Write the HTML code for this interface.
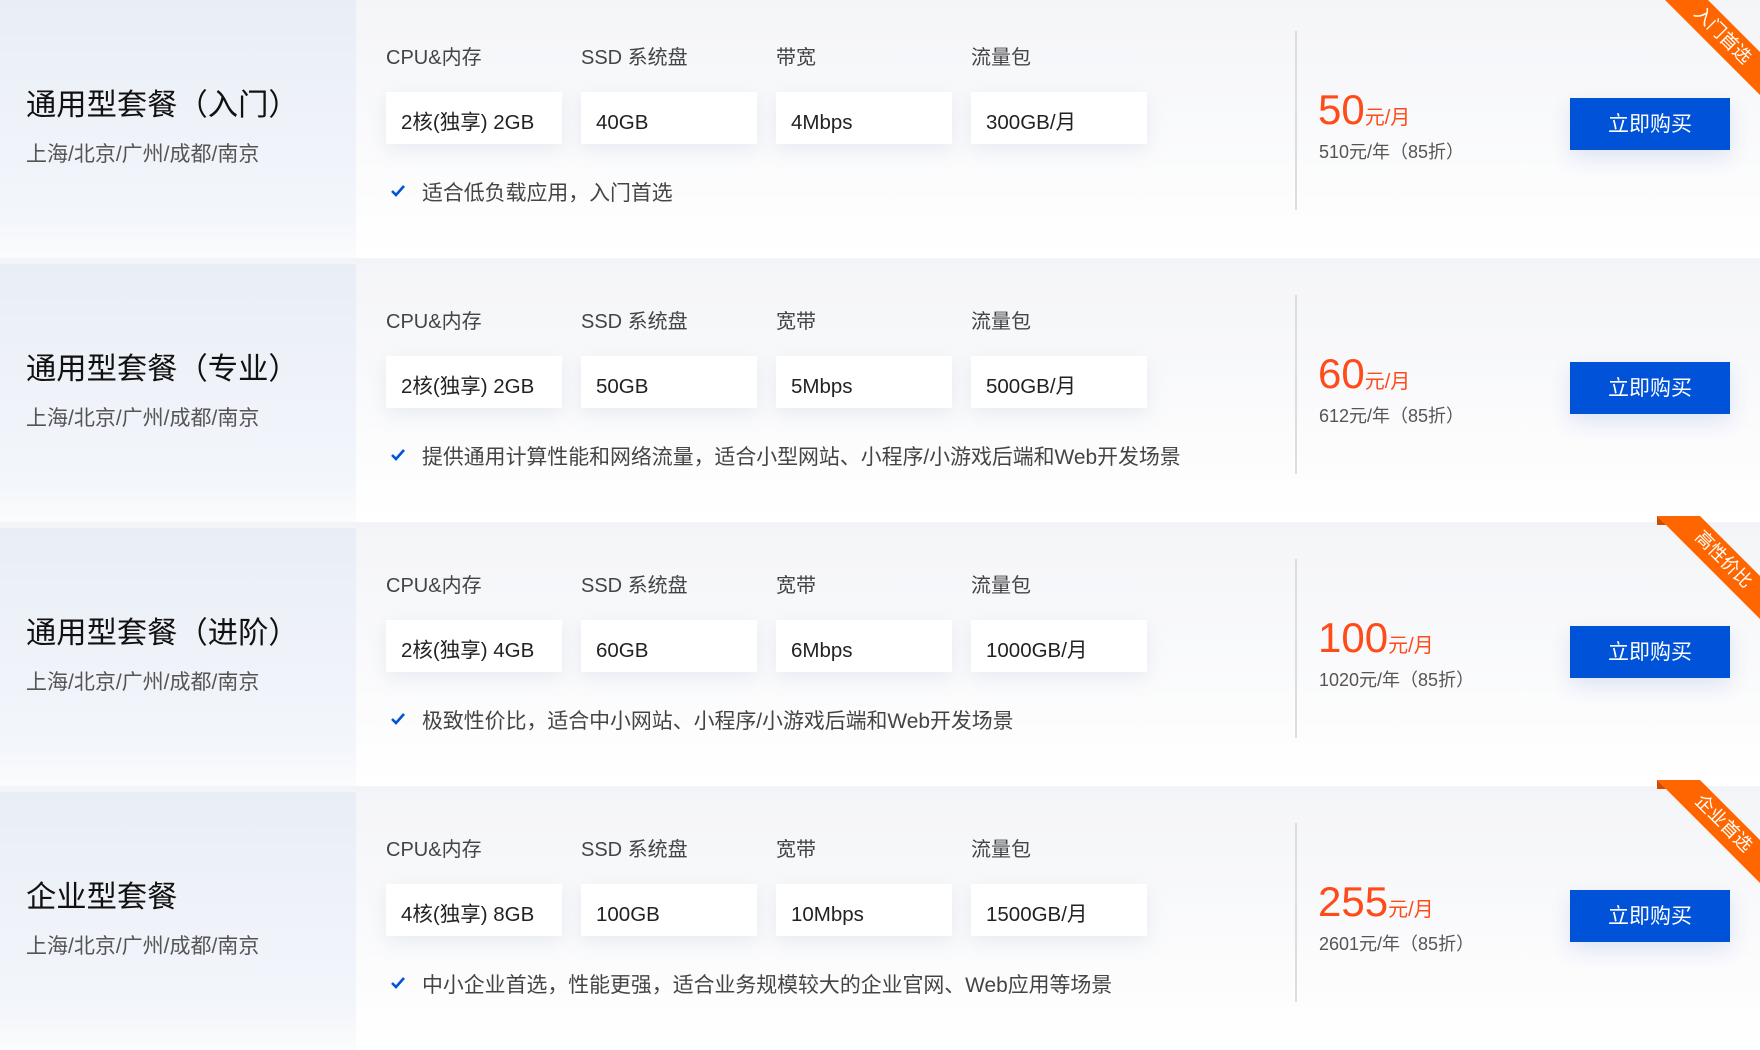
<!DOCTYPE html><html><head><meta charset="utf-8"><style>
body{margin:0;width:1760px;height:1043px;background:#f3f4f7;font-family:"Liberation Sans","Noto Sans CJK SC",sans-serif;overflow:hidden;position:relative}
.row{position:absolute;left:0;width:1760px;height:258px;background:linear-gradient(#f4f5f8,#fff);}
.left{position:absolute;left:0;top:0;width:356px;height:258px;background:linear-gradient(#e9eef6,#f3f6fb 85%,#fbfcfd)}
.title{position:absolute;left:26px;top:80px;font-size:30.3px;color:#111}
.sub{position:absolute;left:26px;top:138px;font-size:21px;color:#555}
.lab{position:absolute;top:41px;font-size:20px;color:#444}
.box{position:absolute;top:92px;width:176px;height:52px;background:#fff;box-shadow:0 6px 18px rgba(180,190,210,.25);font-size:20.5px;color:#222;line-height:62px;box-sizing:border-box;padding-left:15px}
.chk{position:absolute;left:388px;top:177px;font-size:20.9px;color:#444}
.chk svg{position:absolute;left:2px;top:7px}
.chk span{margin-left:34px}
.div{position:absolute;left:1295px;top:31px;width:2px;height:179px;background:#ddd}
.price{position:absolute;left:1318px;top:85px;color:#ff4a1a;font-size:42px;line-height:50px}
.price small{font-size:20px}
.yr{position:absolute;left:1319px;top:138px;font-size:18px;color:#555}
.btn{position:absolute;left:1570px;top:98px;width:160px;height:52px;background:#0052d9;color:#fff;font-size:21px;text-align:center;line-height:54px;box-shadow:0 8px 22px rgba(0,60,180,.12)}
.rib{position:absolute;right:0;top:0}
</style></head><body>
<div class="row" style="top:0">
<div class="left"></div><div class="title">通用型套餐（入门）</div><div class="sub">上海/北京/广州/成都/南京</div>
<div class="lab" style="left:386px">CPU&amp;内存</div><div class="lab" style="left:581px">SSD 系统盘</div><div class="lab" style="left:776px">带宽</div><div class="lab" style="left:971px">流量包</div>
<div class="box" style="left:386px">2核(独享) 2GB</div><div class="box" style="left:581px">40GB</div><div class="box" style="left:776px">4Mbps</div><div class="box" style="left:971px">300GB/月</div>
<div class="chk"><svg width="16" height="14"><path d="M2 7l4 4 8-9" stroke="#0052d9" stroke-width="2.6" fill="none"/></svg><span>适合低负载应用，入门首选</span></div>
<div class="div"></div><div class="price">50<small>元/月</small></div><div class="yr">510元/年（85折）</div><div class="btn">立即购买</div>
<svg class="rib" width="110" height="110" viewBox="0 0 110 110"><polygon points="7,-8 50,-8 110,52 110,95" fill="#ff6600"/><text transform="translate(72,36) rotate(45)" fill="#fff" font-size="18" text-anchor="middle" dominant-baseline="middle" font-family="Noto Sans CJK SC,sans-serif">入门首选</text></svg>
</div>
<div class="row" style="top:264px">
<div class="left"></div><div class="title">通用型套餐（专业）</div><div class="sub">上海/北京/广州/成都/南京</div>
<div class="lab" style="left:386px">CPU&amp;内存</div><div class="lab" style="left:581px">SSD 系统盘</div><div class="lab" style="left:776px">宽带</div><div class="lab" style="left:971px">流量包</div>
<div class="box" style="left:386px">2核(独享) 2GB</div><div class="box" style="left:581px">50GB</div><div class="box" style="left:776px">5Mbps</div><div class="box" style="left:971px">500GB/月</div>
<div class="chk"><svg width="16" height="14"><path d="M2 7l4 4 8-9" stroke="#0052d9" stroke-width="2.6" fill="none"/></svg><span>提供通用计算性能和网络流量，适合小型网站、小程序/小游戏后端和Web开发场景</span></div>
<div class="div"></div><div class="price">60<small>元/月</small></div><div class="yr">612元/年（85折）</div><div class="btn">立即购买</div>
</div>
<div class="row" style="top:528px">
<div class="left"></div><div class="title">通用型套餐（进阶）</div><div class="sub">上海/北京/广州/成都/南京</div>
<div class="lab" style="left:386px">CPU&amp;内存</div><div class="lab" style="left:581px">SSD 系统盘</div><div class="lab" style="left:776px">宽带</div><div class="lab" style="left:971px">流量包</div>
<div class="box" style="left:386px">2核(独享) 4GB</div><div class="box" style="left:581px">60GB</div><div class="box" style="left:776px">6Mbps</div><div class="box" style="left:971px">1000GB/月</div>
<div class="chk"><svg width="16" height="14"><path d="M2 7l4 4 8-9" stroke="#0052d9" stroke-width="2.6" fill="none"/></svg><span>极致性价比，适合中小网站、小程序/小游戏后端和Web开发场景</span></div>
<div class="div"></div><div class="price">100<small>元/月</small></div><div class="yr">1020元/年（85折）</div><div class="btn">立即购买</div>
</div>
<div class="row" style="top:792px">
<div class="left"></div><div class="title">企业型套餐</div><div class="sub">上海/北京/广州/成都/南京</div>
<div class="lab" style="left:386px">CPU&amp;内存</div><div class="lab" style="left:581px">SSD 系统盘</div><div class="lab" style="left:776px">宽带</div><div class="lab" style="left:971px">流量包</div>
<div class="box" style="left:386px">4核(独享) 8GB</div><div class="box" style="left:581px">100GB</div><div class="box" style="left:776px">10Mbps</div><div class="box" style="left:971px">1500GB/月</div>
<div class="chk"><svg width="16" height="14"><path d="M2 7l4 4 8-9" stroke="#0052d9" stroke-width="2.6" fill="none"/></svg><span>中小企业首选，性能更强，适合业务规模较大的企业官网、Web应用等场景</span></div>
<div class="div"></div><div class="price">255<small>元/月</small></div><div class="yr">2601元/年（85折）</div><div class="btn">立即购买</div>
</div>
<svg style="position:absolute;left:1650px;top:512px" width="110" height="115" viewBox="0 0 110 115"><polygon points="7,4 50,4 110,64 110,107" fill="#ff6600"/><polygon points="7,4 7,13 16,13" fill="#d04a00"/><text transform="translate(73,48) rotate(45)" fill="#fff" font-size="18" text-anchor="middle" dominant-baseline="middle" font-family="Noto Sans CJK SC,sans-serif">高性价比</text></svg>
<svg style="position:absolute;left:1650px;top:776px" width="110" height="115" viewBox="0 0 110 115"><polygon points="7,4 50,4 110,64 110,107" fill="#ff6600"/><polygon points="7,4 7,13 16,13" fill="#d04a00"/><text transform="translate(73,48) rotate(45)" fill="#fff" font-size="18" text-anchor="middle" dominant-baseline="middle" font-family="Noto Sans CJK SC,sans-serif">企业首选</text></svg>
</body></html>
